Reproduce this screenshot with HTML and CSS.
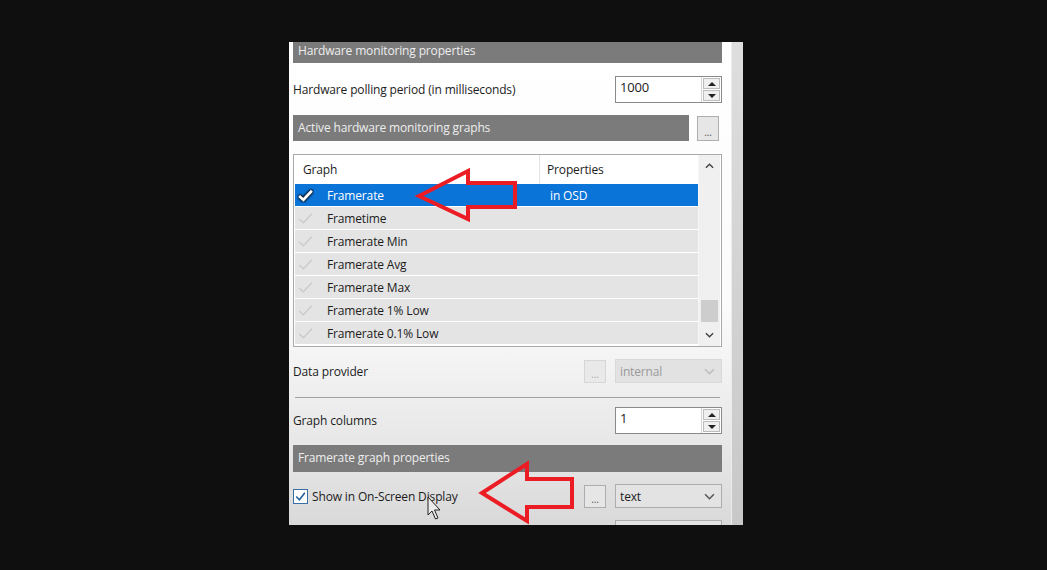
FILE: index.html
```html
<!DOCTYPE html>
<html lang="en">
<head>
    <meta charset="UTF-8">
    <title>Monitoring properties</title>
    <link rel="stylesheet" href="styles.css">
</head>
<body>
    <div class="window">
        <div class="content">
            <div class="section-bar top-bar">Hardware monitoring properties</div>

            <div class="field-row polling-row">
                <span class="label">Hardware polling period (in milliseconds)</span>
                <div class="spin">
                    <span class="spin-value">1000</span>
                    <div class="spin-btns">
                        <span class="spin-btn"><i class="tri up"></i></span>
                        <span class="spin-btn"><i class="tri down"></i></span>
                    </div>
                </div>
            </div>

            <div class="bar-row">
                <div class="section-bar">Active hardware monitoring graphs</div>
                <span class="dots-btn">...</span>
            </div>

            <div class="list">
                <div class="list-main">
                    <div class="list-head">
                        <span class="col-graph">Graph</span>
                        <span class="col-props">Properties</span>
                    </div>
                    <div class="list-row selected">
                        <svg class="check" viewBox="0 0 16 14"><path d="M2 7.5 L6 11 L14 2.5" /></svg>
                        <span class="col-name">Framerate</span>
                        <span class="col-val">in OSD</span>
                    </div>
                    <div class="list-row">
                        <svg class="check" viewBox="0 0 16 14"><path d="M2 7.5 L6 11 L14 2.5" /></svg>
                        <span class="col-name">Frametime</span>
                    </div>
                    <div class="list-row">
                        <svg class="check" viewBox="0 0 16 14"><path d="M2 7.5 L6 11 L14 2.5" /></svg>
                        <span class="col-name">Framerate Min</span>
                    </div>
                    <div class="list-row">
                        <svg class="check" viewBox="0 0 16 14"><path d="M2 7.5 L6 11 L14 2.5" /></svg>
                        <span class="col-name">Framerate Avg</span>
                    </div>
                    <div class="list-row">
                        <svg class="check" viewBox="0 0 16 14"><path d="M2 7.5 L6 11 L14 2.5" /></svg>
                        <span class="col-name">Framerate Max</span>
                    </div>
                    <div class="list-row">
                        <svg class="check" viewBox="0 0 16 14"><path d="M2 7.5 L6 11 L14 2.5" /></svg>
                        <span class="col-name">Framerate 1% Low</span>
                    </div>
                    <div class="list-row">
                        <svg class="check" viewBox="0 0 16 14"><path d="M2 7.5 L6 11 L14 2.5" /></svg>
                        <span class="col-name">Framerate 0.1% Low</span>
                    </div>
                </div>
                <div class="list-scroll">
                    <svg class="chev" viewBox="0 0 10 6"><path d="M1 5 L5 1 L9 5" /></svg>
                    <div class="scroll-track">
                        <div class="scroll-thumb"></div>
                    </div>
                    <svg class="chev" viewBox="0 0 10 6"><path d="M1 1 L5 5 L9 1" /></svg>
                </div>
            </div>

            <div class="field-row provider-row">
                <span class="label">Data provider</span>
                <span class="dots-btn disabled">...</span>
                <div class="combo disabled">
                    <span>internal</span>
                    <svg class="chev" viewBox="0 0 10 6"><path d="M1 1 L5 5 L9 1" /></svg>
                </div>
            </div>

            <div class="separator"></div>

            <div class="field-row columns-row">
                <span class="label">Graph columns</span>
                <div class="spin">
                    <span class="spin-value">1</span>
                    <div class="spin-btns">
                        <span class="spin-btn"><i class="tri up"></i></span>
                        <span class="spin-btn"><i class="tri down"></i></span>
                    </div>
                </div>
            </div>

            <div class="section-bar">Framerate graph properties</div>

            <div class="field-row osd-row">
                <label class="checkbox">
                    <span class="box">
                        <svg viewBox="0 0 12 12"><path d="M2 6 L5 9 L10 2.5" /></svg>
                    </span>
                    Show in On-Screen Display
                </label>
                <span class="dots-btn">...</span>
                <div class="combo">
                    <span>text</span>
                    <svg class="chev" viewBox="0 0 10 6"><path d="M1 1 L5 5 L9 1" /></svg>
                </div>
            </div>

            <div class="field-row tail-row">
                <div class="combo tail"></div>
            </div>
        </div>
        <div class="edge"></div>
    </div>

    <!-- red call-out arrows and the mouse pointer drawn over the dialog -->
    <svg class="overlay" width="1047" height="570" viewBox="0 0 1047 570">
        <polygon class="callout" points="419,196 468,171 468,183 515,183 515,207 468,207 468,219" />
        <polygon class="callout" points="482,493 527,464 527,479 572,479 572,507 527,507 527,521" />
        <path class="pointer" d="M428 497 L428 515 L432 511 L435.5 519 L438 518 L434.5 510 L440 510 Z" />
    </svg>
</body>
</html>
```

FILE: styles.css
```css
body {
    margin: 0;
    background: #0f0f0f;
    font-family: "Open Sans", "Noto Sans", sans-serif;
    font-size: 12px;
    letter-spacing: -0.15px;
    color: #1c1c1c;
    height: 570px;
    overflow: hidden;
}

.window {
    display: flex;
    width: 454px;
    height: 483px;
    margin: 42px 0 0 289px;
    background: linear-gradient(#ffffff 0%, #fbfbfb 55%, #e6e6e6 85%, #d9d9d9 100%);
    overflow: hidden;
}
.content {
    width: 429px;
    padding-left: 4px;
}
.edge {
    margin-left: 9px;
    width: 11px;
    background: linear-gradient(#dedede, #c8c8c8);
    border-left: 1px solid #ececec;
}

/* grey group headers */
.section-bar {
    height: 27px;
    line-height: 26px;
    background: #7b7b7b;
    color: #eeeeee;
    padding-left: 5px;
    box-sizing: border-box;
}
.top-bar {
    height: 21px;
    line-height: 17px;
}
.bar-row {
    display: flex;
    align-items: flex-start;
    margin-top: 12px;
}
.bar-row .section-bar {
    width: 396px;
    height: 26px;
}
.bar-row .dots-btn {
    margin-left: 8px;
    margin-top: 1px;
    height: 25px;
    line-height: 30px;
}

/* label + control rows */
.field-row {
    display: flex;
    align-items: center;
}
.field-row .label {
    flex: 1;
}
.polling-row {
    margin-top: 13px;
    height: 27px;
}
.provider-row {
    margin-top: 12px;
    height: 24px;
}
.columns-row {
    margin-top: 9px;
    height: 27px;
    margin-bottom: 11px;
}
.osd-row {
    margin-top: 12px;
    height: 24px;
}
.tail-row {
    margin-top: 12px;
    justify-content: flex-end;
}

.spin {
    display: flex;
    width: 107px;
    height: 27px;
    box-sizing: border-box;
    border: 1px solid #8a8a8a;
    background: #fff;
}
.spin-value {
    flex: 1;
    padding: 2px 0 0 4px;
    line-height: 16px;
    font-size: 13px;
}
.spin-btns {
    width: 19px;
    display: flex;
    flex-direction: column;
    border-left: 1px solid #d4d4d4;
}
.spin-btn {
    flex: 1;
    display: flex;
    align-items: center;
    justify-content: center;
    background: #efefef;
    border: 1px solid #bcbcbc;
    margin: 1px 1px 0 1px;
}
.spin-btn + .spin-btn {
    margin-bottom: 1px;
}
.tri {
    width: 0;
    height: 0;
    border-left: 4px solid transparent;
    border-right: 4px solid transparent;
}
.tri.up {
    border-bottom: 4px solid #222;
}
.tri.down {
    border-top: 4px solid #222;
}

.dots-btn {
    width: 22px;
    height: 23px;
    box-sizing: border-box;
    border: 1px solid #adadad;
    background: #e6e6e6;
    color: #555;
    font-size: 10px;
    text-align: center;
    line-height: 26px;
}
.dots-btn.disabled {
    border-color: #d6d6d6;
    background: #e9e9e9;
    color: #aaa;
}

.combo {
    display: flex;
    align-items: center;
    justify-content: space-between;
    width: 107px;
    height: 24px;
    margin-left: 9px;
    box-sizing: border-box;
    border: 1px solid #adadad;
    background: #e3e3e3;
    padding: 0 6px 0 4px;
}
.combo.disabled {
    border-color: #d8d8d8;
    background: #e2e2e2;
    color: #9a9a9a;
}
.combo.tail {
    height: 12px;
    border-bottom: none;
}
.combo .chev {
    width: 11px;
    height: 7px;
}
.chev path {
    fill: none;
    stroke: #555;
    stroke-width: 1.4;
}
.combo.disabled .chev path {
    stroke: #bdbdbd;
}

/* graph list */
.list {
    display: flex;
    height: 193px;
    margin-top: 13px;
    box-sizing: border-box;
    border: 1px solid #a9a9a9;
    background: #fff;
}
.list-main {
    flex: 1;
    padding-left: 1px;
}
.list-head {
    display: flex;
    height: 29px;
    align-items: center;
}
.col-graph {
    width: 236px;
    padding-left: 8px;
    border-right: 1px solid #e3e3e3;
    line-height: 29px;
}
.col-props {
    padding-left: 7px;
}
.list-row {
    display: flex;
    align-items: center;
    height: 22px;
    border-bottom: 1px solid #fff;
    background: #e4e4e4;
}
.list-row .check {
    width: 17px;
    height: 15px;
    margin: 0 13px 0 2px;
}
.check path {
    fill: none;
    stroke: #cbcbcb;
    stroke-width: 1.4;
}
.list-row.selected {
    background: #0b74d8;
    color: #fff;
}
.list-row.selected .check path {
    stroke: #fff;
    stroke-width: 2.6;
    filter: drop-shadow(0 0 1px #000) drop-shadow(0 0 1px #000);
}
.col-name {
    width: 223px;
}
.list-scroll {
    width: 21px;
    display: flex;
    flex-direction: column;
    align-items: center;
    background: #f0f0f0;
    border-left: 1px solid #f6f6f6;
    margin-right: 1px;
}
.list-scroll .chev {
    width: 9px;
    height: 6px;
    margin: 8px 0;
}
.list-scroll .chev path {
    stroke: #444;
    stroke-width: 1.6;
}
.scroll-track {
    flex: 1;
    width: 17px;
    display: flex;
    flex-direction: column;
    justify-content: flex-end;
}
.scroll-thumb {
    height: 22px;
    background: #cdcdcd;
    margin-bottom: 2px;
}

.separator {
    height: 1px;
    margin: 14px 2px 8px 2px;
    background: #a2a2a2;
}

.checkbox {
    flex: 1;
    display: flex;
    align-items: center;
    gap: 4px;
}
.box {
    width: 15px;
    height: 15px;
    box-sizing: border-box;
    border: 1px solid #3a6ea8;
    background: #fff;
}
.box svg {
    display: block;
    width: 13px;
    height: 13px;
}
.box path {
    fill: none;
    stroke: #1f5d9e;
    stroke-width: 1.4;
}

.overlay {
    position: absolute;
    top: 0;
    left: 0;
    pointer-events: none;
}
.callout {
    fill: none;
    stroke: #ec1c24;
    stroke-width: 4;
    stroke-linejoin: miter;
}
.pointer {
    fill: #ececec;
    stroke: #222;
    stroke-width: 1;
    stroke-linejoin: round;
}
```
